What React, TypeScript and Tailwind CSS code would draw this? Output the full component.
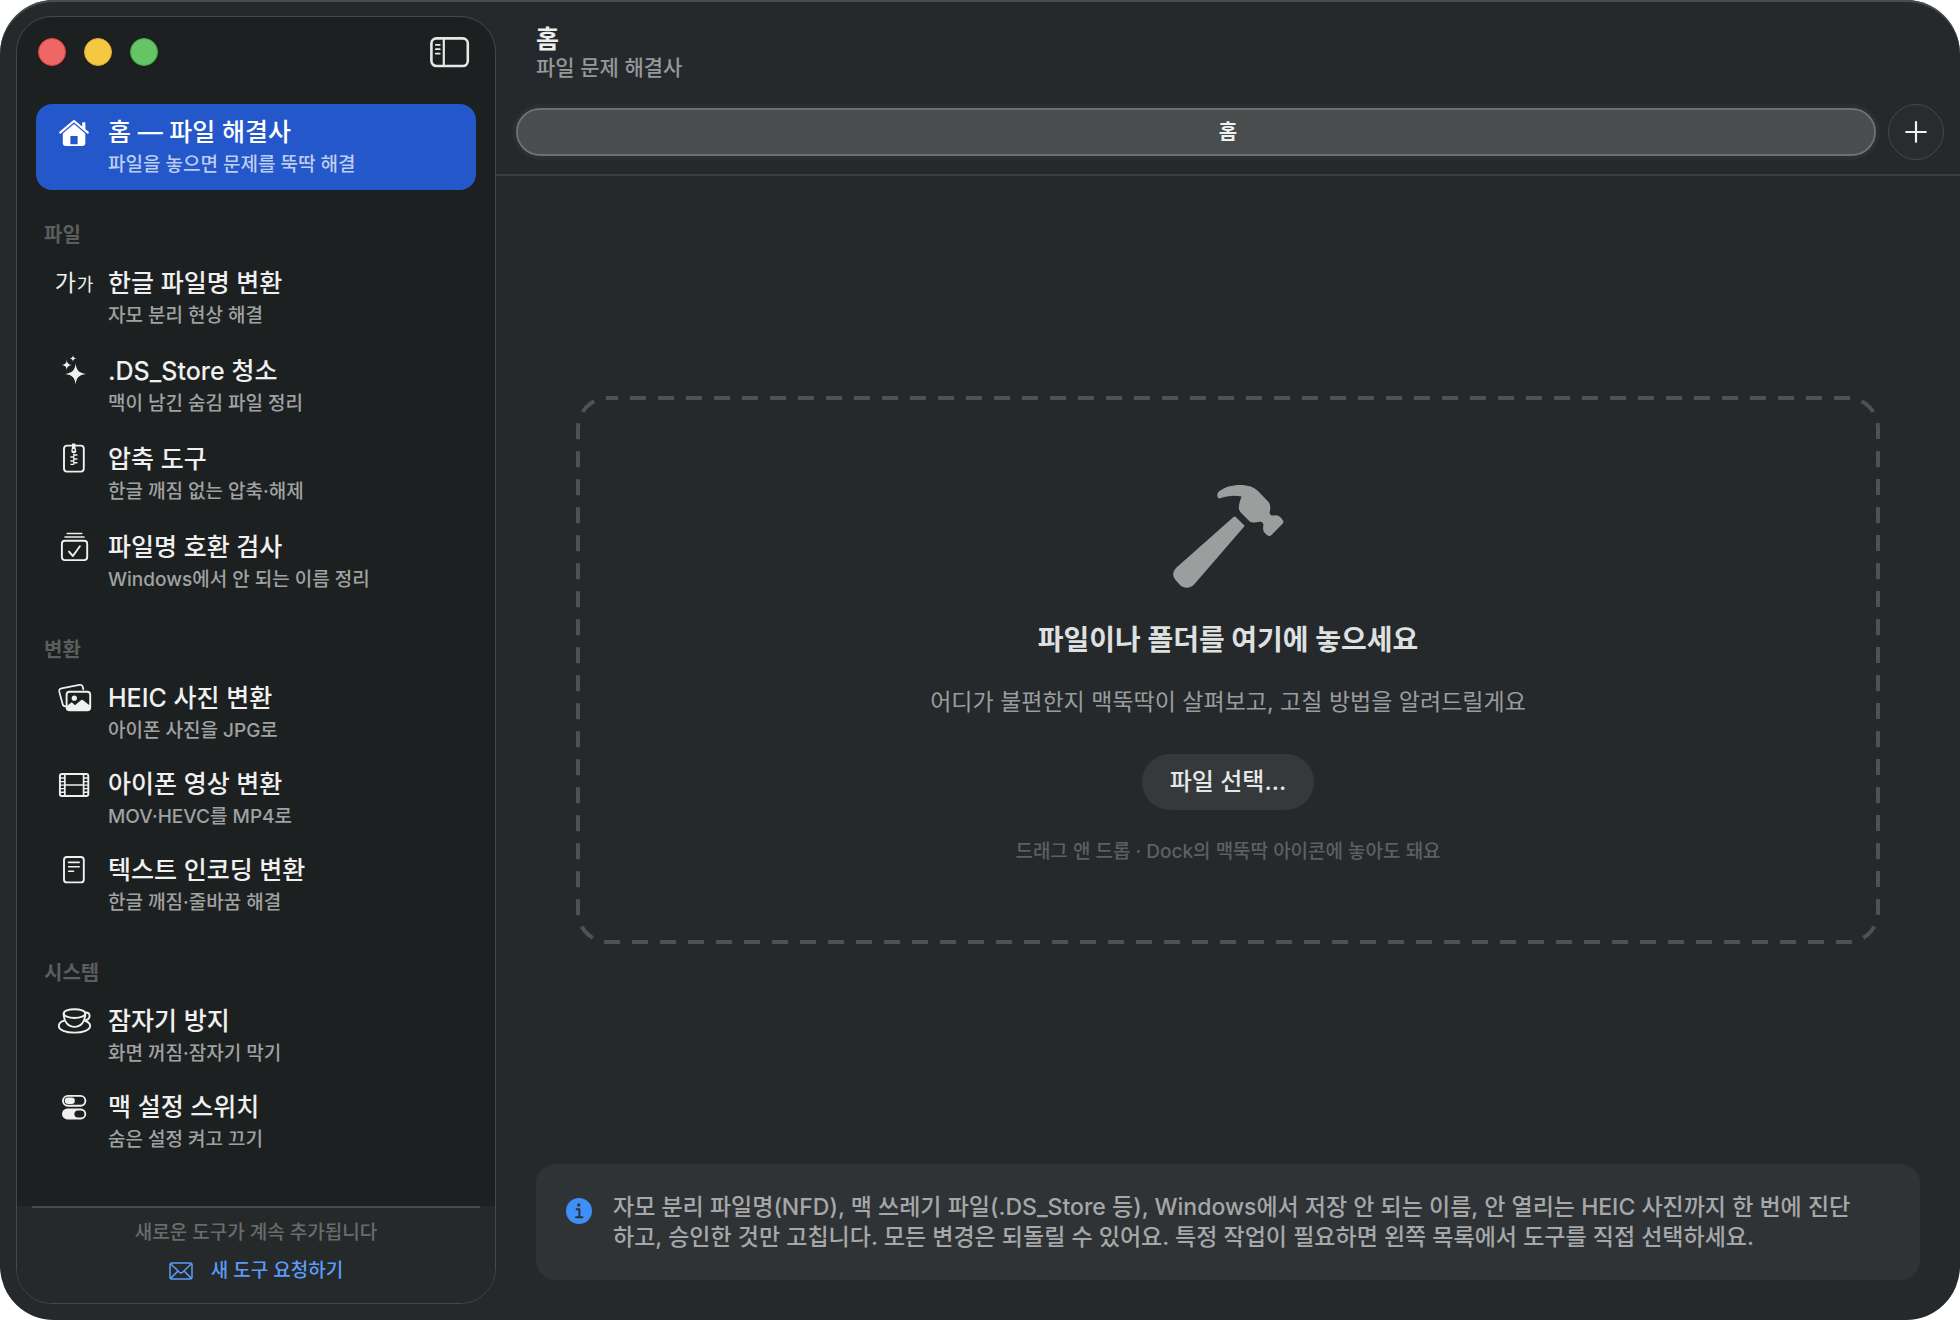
import React, { useState } from "react";

interface Tool {
  id: string;
  title: string;
  detail: string;
  icon: React.ReactNode;
}

interface ToolGroup {
  label: string;
  spacing: string;
  tools: Tool[];
}

function Glyph({ children }: { children: React.ReactNode }) {
  return (
    <svg
      viewBox="0 0 36 36"
      className="size-9"
      fill="none"
      stroke="currentColor"
      strokeWidth="1.9"
      strokeLinecap="round"
      strokeLinejoin="round"
      aria-hidden="true"
    >
      {children}
    </svg>
  );
}

const homeIcon = (
  <Glyph>
    <path d="M4.2 18.6 18 7l13.8 11.6" strokeWidth="2.2" />
    <path
      d="M18 10 29.3 19.4V29a3 3 0 0 1-3 3H9.8a3 3 0 0 1-3-3v-9.6ZM14.4 22v8.2h7.2V22Z"
      fill="currentColor"
      fillRule="evenodd"
      stroke="none"
    />
    <path d="M26.2 8.8q0-.6.6-.6h2q.6 0 .6.6v7l-3.2-2.7Z" fill="currentColor" stroke="none" />
  </Glyph>
);

const sparklesIcon = (
  <Glyph>
    <g fill="currentColor" stroke="none">
      <path d="M19.6 10.6c.9 7 3.3 9.4 10.3 10.4-7 1-9.4 3.4-10.3 10.4-.9-7-3.3-9.4-10.3-10.4 7-1 9.4-3.4 10.3-10.4Z" />
      <path d="M10.8 7c.5 3.4 1.6 4.5 5 5-3.4.5-4.5 1.6-5 5-.5-3.4-1.6-4.5-5-5 3.4-.5 4.5-1.6 5-5Z" />
      <path d="M17 2.3c.3 2.1 1 2.8 3.2 3.2-2.2.3-2.9 1-3.2 3.2-.3-2.2-1-2.9-3.2-3.2 2.2-.4 2.9-1.1 3.2-3.2Z" />
    </g>
  </Glyph>
);

const zipIcon = (
  <Glyph>
    <rect x="8" y="4.6" width="19.8" height="26" rx="3" />
    <path d="M16 2.6h3.4v3.5l.9 3.6a2.5 2.5 0 0 1-5 0l.7-3.6Z" fill="currentColor" stroke="none" />
    <circle cx="17.7" cy="9" r="1.1" className="fill-[#1d2021]" stroke="none" />
    <path
      d="M17.8 14h3.6M14.4 16h3.6M17.8 18h3.6M14.4 20h3.6M17.8 21.8h3.6M14.4 23.4h3.6"
      strokeWidth="1.4"
      strokeLinecap="butt"
    />
    <path d="M17.8 13.2v10" strokeWidth="1.2" />
  </Glyph>
);

const checkIcon = (
  <Glyph>
    <path d="M11.2 4.4h14.6M9 8h19" strokeWidth="1.5" />
    <rect x="5.9" y="11.7" width="25.3" height="19.4" rx="3" />
    <path d="m13 22.6 3.9 4.4 7-9.8" />
  </Glyph>
);

const photoIcon = (
  <Glyph>
    <path
      d="M9.4 26.3c-1.5 0-2.5-.7-2.8-2.3L3.3 11.7c-.4-1.9.4-3 2.2-3.3l17.9-3.6c1.9-.3 3 .4 3.4 2.2l.5 2.3"
      strokeWidth="1.7"
    />
    <rect x="10.6" y="11.7" width="23.6" height="18.6" rx="3" />
    <circle cx="18.3" cy="18.2" r="2.6" fill="currentColor" stroke="none" />
    <path
      d="m10.8 26 4.2-3.2q.8-.6 1.6.1l2.4 2.3 5.6-4.8q1.4-1.1 2.8 0l6.7 5.4v2.2a2.4 2.4 0 0 1-2.4 2.4H13.2a2.4 2.4 0 0 1-2.4-2.4Z"
      fill="currentColor"
      stroke="none"
    />
  </Glyph>
);

const filmIcon = (
  <Glyph>
    <rect x="3.9" y="8" width="28.4" height="22" rx="2" />
    <path d="M8.8 8v22M27.6 8v22M8.8 19h18.8" strokeWidth="1.7" />
    <path
      d="M4 12h4.8M4 15.6h4.8M4 19.1h4.8M4 22.6h4.8M4 26.2h4.8M27.6 12h4.6M27.6 15.6h4.6M27.6 19.1h4.6M27.6 22.6h4.6M27.6 26.2h4.6"
      strokeWidth="1.4"
    />
  </Glyph>
);

const documentIcon = (
  <Glyph>
    <rect x="8" y="5" width="19.8" height="25.4" rx="3" />
    <path d="M12.6 10.4h10.6M12.6 14.8h10.6M12.6 19.2h5" strokeWidth="1.6" />
  </Glyph>
);

const cupIcon = (
  <Glyph>
    <ellipse cx="18.5" cy="10.6" rx="10.8" ry="4.4" />
    <path d="M7.7 10.6c0 8.5 4.6 13.3 10.8 13.3s10.8-4.8 10.8-13.3" />
    <path d="M29.3 9.6c2.6-.4 4.3.8 4.3 3.1 0 2.8-2.4 4.6-5.9 4.8" />
    <path d="M8.2 17.6c-3.5 1-5.4 3-5.4 5.4 0 4 6.9 6.6 15.7 6.6s15.6-2.6 15.6-6.6c0-2-1.5-3.9-4.6-5" />
  </Glyph>
);

const switchIcon = (
  <Glyph>
    <rect x="7" y="6.9" width="22.4" height="9.8" rx="4.9" />
    <rect x="8.8" y="8.6" width="10" height="6.4" rx="3.2" fill="currentColor" stroke="none" />
    <rect x="6" y="19.6" width="24.2" height="10.8" rx="5.4" fill="currentColor" stroke="none" />
    <rect x="18.4" y="21.4" width="10" height="7.2" rx="3.6" className="fill-[#1d2021]" stroke="none" />
  </Glyph>
);

const hangulIcon = (
  <span className="flex items-baseline gap-px whitespace-nowrap leading-9" aria-hidden="true">
    <span className="text-[23px]">가</span>
    <span className="text-lg">가</span>
  </span>
);

const home: Tool = {
  id: "home",
  title: "홈 — 파일 해결사",
  detail: "파일을 놓으면 문제를 뚝딱 해결",
  icon: homeIcon,
};

const groups: ToolGroup[] = [
  {
    label: "파일",
    spacing: "gap-0.5",
    tools: [
      { id: "hangul", title: "한글 파일명 변환", detail: "자모 분리 현상 해결", icon: hangulIcon },
      { id: "dsstore", title: ".DS_Store 청소", detail: "맥이 남긴 숨김 파일 정리", icon: sparklesIcon },
      { id: "zip", title: "압축 도구", detail: "한글 깨짐 없는 압축·해제", icon: zipIcon },
      { id: "names", title: "파일명 호환 검사", detail: "Windows에서 안 되는 이름 정리", icon: checkIcon },
    ],
  },
  {
    label: "변환",
    spacing: "gap-0",
    tools: [
      { id: "heic", title: "HEIC 사진 변환", detail: "아이폰 사진을 JPG로", icon: photoIcon },
      { id: "video", title: "아이폰 영상 변환", detail: "MOV·HEVC를 MP4로", icon: filmIcon },
      { id: "encoding", title: "텍스트 인코딩 변환", detail: "한글 깨짐·줄바꿈 해결", icon: documentIcon },
    ],
  },
  {
    label: "시스템",
    spacing: "gap-0",
    tools: [
      { id: "awake", title: "잠자기 방지", detail: "화면 꺼짐·잠자기 막기", icon: cupIcon },
      { id: "settings", title: "맥 설정 스위치", detail: "숨은 설정 켜고 끄기", icon: switchIcon },
    ],
  },
];

function ToolRow({ tool, selected, onSelect }: { tool: Tool; selected: boolean; onSelect(id: string): void }) {
  return (
    <button
      type="button"
      onClick={() => onSelect(tool.id)}
      aria-current={selected ? "page" : undefined}
      className={`flex w-full items-start gap-3.5 rounded-2xl px-[18px] py-2.5 text-left ${
        selected ? "bg-[#2457c9] text-white" : "text-[#f0f0f0]"
      }`}
    >
      <span className="flex h-9 w-10 shrink-0 items-center justify-center">{tool.icon}</span>
      <span className="flex min-w-0 flex-col">
        <span className="text-[25px] leading-9 font-medium">{tool.title}</span>
        <span className={`text-[19px] leading-[30px] font-medium ${selected ? "text-[#bdcdf0]" : "text-[#a0a2a2]"}`}>
          {tool.detail}
        </span>
      </span>
    </button>
  );
}

function Sidebar({ selected, onSelect }: { selected: string; onSelect(id: string): void }) {
  return (
    <aside className="my-4 ml-4 flex w-[480px] shrink-0 flex-col overflow-hidden rounded-[36px] border border-[#414a4d] bg-[#1d2021]">
      <div className="flex items-center justify-between pt-[18px] pr-6 pl-[21px]">
        <div className="flex gap-[18px]">
          <button type="button" aria-label="닫기" className="size-7 rounded-full border border-[#e0443e] bg-[#ee6666]" />
          <button type="button" aria-label="최소화" className="size-7 rounded-full border border-[#e0a92e] bg-[#f4c843]" />
          <button type="button" aria-label="확대" className="size-7 rounded-full border border-[#3fae45] bg-[#65c466]" />
        </div>
        <button type="button" aria-label="사이드바 가리기" className="text-[#e6e7e7]">
          <svg viewBox="0 0 42 34" className="h-[34px] w-[42px]" fill="none" stroke="currentColor" strokeLinecap="round">
            <rect x="2.4" y="3.4" width="36.4" height="27.6" rx="5" strokeWidth="2.6" />
            <path d="M14.8 4v26.5" strokeWidth="2.2" strokeLinecap="butt" />
            <path d="M6.8 9.8h4M6.8 14.2h4M6.8 18.6h4" strokeWidth="1.7" />
          </svg>
        </button>
      </div>

      <nav className="flex flex-1 flex-col px-[19px] pt-[35px]">
        <ToolRow tool={home} selected={selected === home.id} onSelect={onSelect} />
        {groups.map((g) => (
          <section key={g.label}>
            <h2 className="px-2 pt-[31px] pb-1.5 text-xl leading-7 font-bold text-[#5b5d5e]">{g.label}</h2>
            <div className={`flex flex-col ${g.spacing}`}>
              {g.tools.map((t) => (
                <ToolRow key={t.id} tool={t} selected={selected === t.id} onSelect={onSelect} />
              ))}
            </div>
          </section>
        ))}
      </nav>

      <footer className="flex flex-col items-center bg-[#26292a] px-[15px] pb-[17px] text-[19px] font-medium">
        <hr className="h-0.5 w-full border-0 bg-[#494c4d]" />
        <p className="pt-2.5 leading-[30px] text-[#696c6d]">새로운 도구가 계속 추가됩니다</p>
        <a href="#request" className="mt-2 flex items-center gap-[18px] leading-[30px] text-[#5a9cf8]">
          <svg
            viewBox="0 0 24 18"
            className="h-[18px] w-6"
            fill="none"
            stroke="currentColor"
            strokeWidth="1.5"
            strokeLinejoin="round"
            aria-hidden="true"
          >
            <rect x="1" y="1" width="22" height="16" rx="2" />
            <path d="m1.6 1.8 8.8 8.4q1.6 1.4 3.2 0l8.8-8.4M1.6 16.4l7.4-7.4M22.4 16.4 15 9" />
          </svg>
          새 도구 요청하기
        </a>
      </footer>
    </aside>
  );
}

function DropZone() {
  return (
    <div className="relative flex w-full flex-col items-center pt-[88px] pb-[78px] text-center">
      <svg className="pointer-events-none absolute inset-0 size-full" fill="none" aria-hidden="true">
        <rect
          x="2"
          y="2"
          rx="30"
          className="h-[calc(100%-4px)] w-[calc(100%-4px)]"
          stroke="#4e5254"
          strokeWidth="4"
          strokeDasharray="16 12"
          strokeDashoffset="6"
        />
      </svg>
      <svg viewBox="0 0 112 104" className="h-[104px] w-28 fill-[#9c9e9d]" aria-hidden="true">
        <path d="M63.5 32.8 72.2 41.2Q72.6 42 72 42.7L22.5 100C18.5 104.6 12.5 105 8 101L3.5 96C.2 92 .5 87.5 4.5 83.5L61.5 33Q62.6 32.2 63.5 32.8Z" />
        <path d="M47.5 14.4C44.8 13.6 44.6 10.2 46.6 7.8 52.5 3 60 1 68 1 76.5 1 82 3.2 86 7L96.5 18C98.8 20.8 98.6 24.8 97.6 28.5 97.4 30.6 99.4 31.8 101.5 31.4 105.5 30.8 107 31.6 109 33.8L111 36.4Q112 38 110.8 39.4L99.8 50.8C98.4 52.3 96.6 52.4 95.2 51.2L92.4 48.4C90.6 46.4 91.2 43.4 91.4 40.4 91.2 38.4 89.4 37.2 87.4 37.8 83.6 38.8 79.6 39 77.2 37L68.8 28.4C65.6 25 66.6 20.6 69.6 12.6 62.5 11 55 12 47.5 14.4Z" />
      </svg>
      <h2 className="mt-8 text-[28px] leading-10 font-bold text-[#dfe0e0]">파일이나 폴더를 여기에 놓으세요</h2>
      <p className="mt-[26px] text-[23px] leading-8 text-[#9a9d9d]">
        어디가 불편한지 맥뚝딱이 살펴보고, 고칠 방법을 알려드릴게요
      </p>
      <button type="button" className="mt-9 h-14 rounded-full bg-[#35393b] px-7 text-2xl font-medium text-[#e6e8e8]">
        파일 선택...
      </button>
      <p className="mt-7 text-[19px] leading-7 font-medium text-[#5d6061]">
        드래그 앤 드롭 · Dock의 맥뚝딱 아이콘에 놓아도 돼요
      </p>
    </div>
  );
}

export default function App() {
  const [selected, setSelected] = useState("home");

  return (
    <div className="min-h-screen bg-white font-['Inter','Noto_Sans_CJK_KR',sans-serif]">
      <div className="flex min-h-screen w-full overflow-hidden rounded-[54px] bg-[#25292c] shadow-[inset_0_2px_0_#474c4e]">
        <Sidebar selected={selected} onSelect={setSelected} />

        <main className="flex min-w-0 flex-1 flex-col">
          <header className="border-b-2 border-[#3a3e41] pb-3.5">
            <div className="px-10 pt-6">
              <h1 className="text-[25px] leading-[30px] font-bold text-[#eceded]">홈</h1>
              <p className="text-[21px] leading-7 font-medium text-[#969899]">파일 문제 해결사</p>
            </div>
            <div className="mt-[22px] flex items-center gap-2 px-4">
              <div role="tablist" className="flex flex-1 rounded-full bg-[#2b2f31] p-1">
                <button
                  type="button"
                  role="tab"
                  aria-selected="true"
                  className="h-12 flex-1 rounded-full border-2 border-[#6b6f70] bg-[#494d4e] pl-16 text-xl font-bold text-[#f0f1f1]"
                >
                  홈
                </button>
              </div>
              <button
                type="button"
                aria-label="새 탭"
                className="flex size-14 items-center justify-center rounded-full border border-[#434b4f] bg-[#282c2f] text-[#f0f1f1]"
              >
                <svg
                  viewBox="0 0 22 22"
                  className="size-[22px]"
                  stroke="currentColor"
                  strokeWidth="2.2"
                  strokeLinecap="round"
                  aria-hidden="true"
                >
                  <path d="M11 1.2v19.6M1.2 11h19.6" />
                </svg>
              </button>
            </div>
          </header>

          <div className="flex flex-1 items-center px-20">
            <DropZone />
          </div>

          <div className="mx-10 mb-10 flex gap-[21px] rounded-[20px] bg-[#2f3335] py-7 pr-14 pl-[30px]">
            <svg viewBox="0 0 26 26" className="mt-1.5 size-[26px] shrink-0" aria-hidden="true">
              <circle cx="13" cy="13" r="13" className="fill-[#3f8ff8]" />
              <circle cx="12.8" cy="6.9" r="1.7" className="fill-[#2f3335]" />
              <path
                d="M10.6 11.2h2.8v8M10 19.3h6.4"
                fill="none"
                stroke="#2f3335"
                strokeWidth="2"
                strokeLinecap="round"
                strokeLinejoin="round"
              />
            </svg>
            <p className="text-[23px] leading-[30px] font-medium text-[#a5a7a8]">
              자모 분리 파일명(NFD), 맥 쓰레기 파일(.DS_Store 등), Windows에서 저장 안 되는 이름, 안 열리는 HEIC 사진까지 한 번에
              진단하고, 승인한 것만 고칩니다. 모든 변경은 되돌릴 수 있어요. 특정 작업이 필요하면 왼쪽 목록에서 도구를 직접 선택하세요.
            </p>
          </div>
        </main>
      </div>
    </div>
  );
}
